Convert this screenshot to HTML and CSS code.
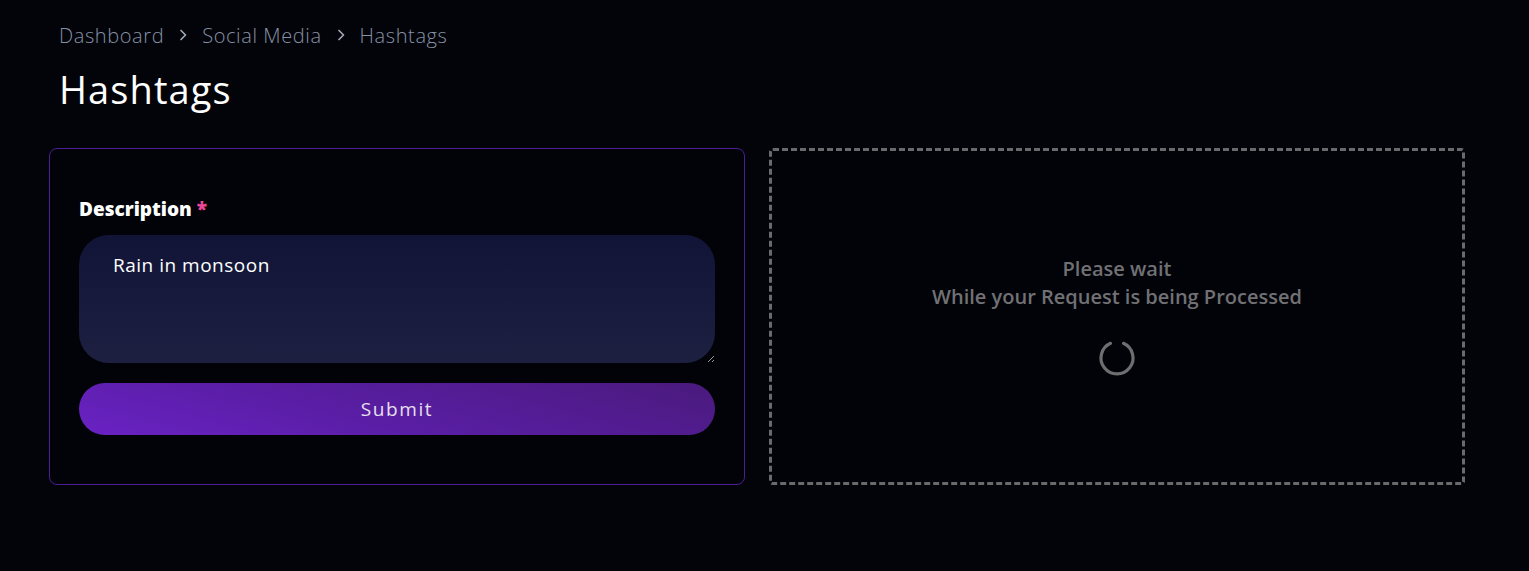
FILE: index.html
```html
<!DOCTYPE html>
<html lang="en">
<head>
<meta charset="utf-8">
<title>Hashtags</title>
<link rel="stylesheet" href="styles.css">
</head>
<body>
<main class="page">
  <nav class="crumbs">
    <span class="crumb">Dashboard</span>
    <svg class="chev" viewBox="0 0 14 14" width="14" height="14"><path d="M5 2.5 L9.5 7 L5 11.5" fill="none" stroke="currentColor" stroke-width="1.7" stroke-linecap="round" stroke-linejoin="round"/></svg>
    <span class="crumb">Social Media</span>
    <svg class="chev" viewBox="0 0 14 14" width="14" height="14"><path d="M5 2.5 L9.5 7 L5 11.5" fill="none" stroke="currentColor" stroke-width="1.7" stroke-linecap="round" stroke-linejoin="round"/></svg>
    <span class="crumb">Hashtags</span>
  </nav>
  <h1 class="title">Hashtags</h1>
  <div class="grid">
    <section class="card form-card">
      <label class="label" for="desc">Description <span class="req">*</span></label>
      <textarea id="desc" class="input">Rain in monsoon</textarea>
      <button class="submit" type="button">Submit</button>
    </section>
    <section class="card result-card">
      <p class="wait">Please wait<br>While your Request is being Processed</p>
      <svg class="spinner" viewBox="0 0 40 40" width="40" height="40">
        <path d="M13.5 5.3 A16 16 0 1 0 26.5 5.3" fill="none" stroke="#6e6e70" stroke-width="3.2" stroke-linecap="round"/>
      </svg>
    </section>
  </div>
</main>
</body>
</html>
```

FILE: styles.css
```css
* { box-sizing: border-box; }
html, body { margin: 0; padding: 0; }
body {
  background: #03040a;
  font-family: "Open Sans", "Inter", sans-serif;
  color: #fff;
  height: 571px;
  overflow: hidden;
}
.page {
  padding: 22px 64px 0 49px;
}
.crumbs {
  display: flex;
  align-items: center;
  gap: 11px;
  padding-left: 10px;
  height: 26px;
  color: #8791a5;
  font-size: 20px;
  font-weight: 300;
  letter-spacing: 0.6px;
}
.chev { color: #a0a7b5; margin: 0 1px; }
.title {
  margin: 15px 0 0 10px;
  font-size: 38px;
  font-weight: 500;
  letter-spacing: 1.1px;
  line-height: 52px;
  color: #fff;
}
.grid {
  display: grid;
  grid-template-columns: 696px 696px;
  gap: 24px;
  margin-top: 33px;
}
.card {
  height: 337px;
  border-radius: 8px;
  background: #020309;
}
.form-card {
  border: 1px solid #4c1d95;
  padding: 49px 29px 0 29px;
  display: flex;
  flex-direction: column;
}
.label {
  font-size: 19px;
  font-weight: 800;
  line-height: 22px;
  color: #fff;
}
.req { color: #ec4899; }
.input {
  margin-top: 15px;
  height: 128px;
  border: none;
  border-radius: 30px;
  background: linear-gradient(180deg, #121437 0%, #1d2041 100%);
  color: #fff;
  font-family: inherit;
  font-size: 19px;
  letter-spacing: 0.5px;
  padding: 17px 34px;
  resize: vertical;
  outline: none;
  color-scheme: dark;
}
.submit {
  margin-top: 20px;
  height: 52px;
  border: none;
  border-radius: 26px;
  background: linear-gradient(195deg, #4a1a7c 0%, #5a1ea6 60%, #6a22c4 100%);
  color: #e6e0ee;
  font-family: inherit;
  font-size: 19px;
  font-weight: 500;
  letter-spacing: 1.6px;
}
.result-card {
  border: 3px dashed #6a6a6c;
  border-radius: 4px;
  display: flex;
  flex-direction: column;
  align-items: center;
  padding-top: 104px;
}
.wait {
  margin: 0;
  text-align: center;
  color: #717174;
  font-size: 20px;
  font-weight: 600;
  line-height: 28px;
}
.spinner {
  margin-top: 27px;
}
```
